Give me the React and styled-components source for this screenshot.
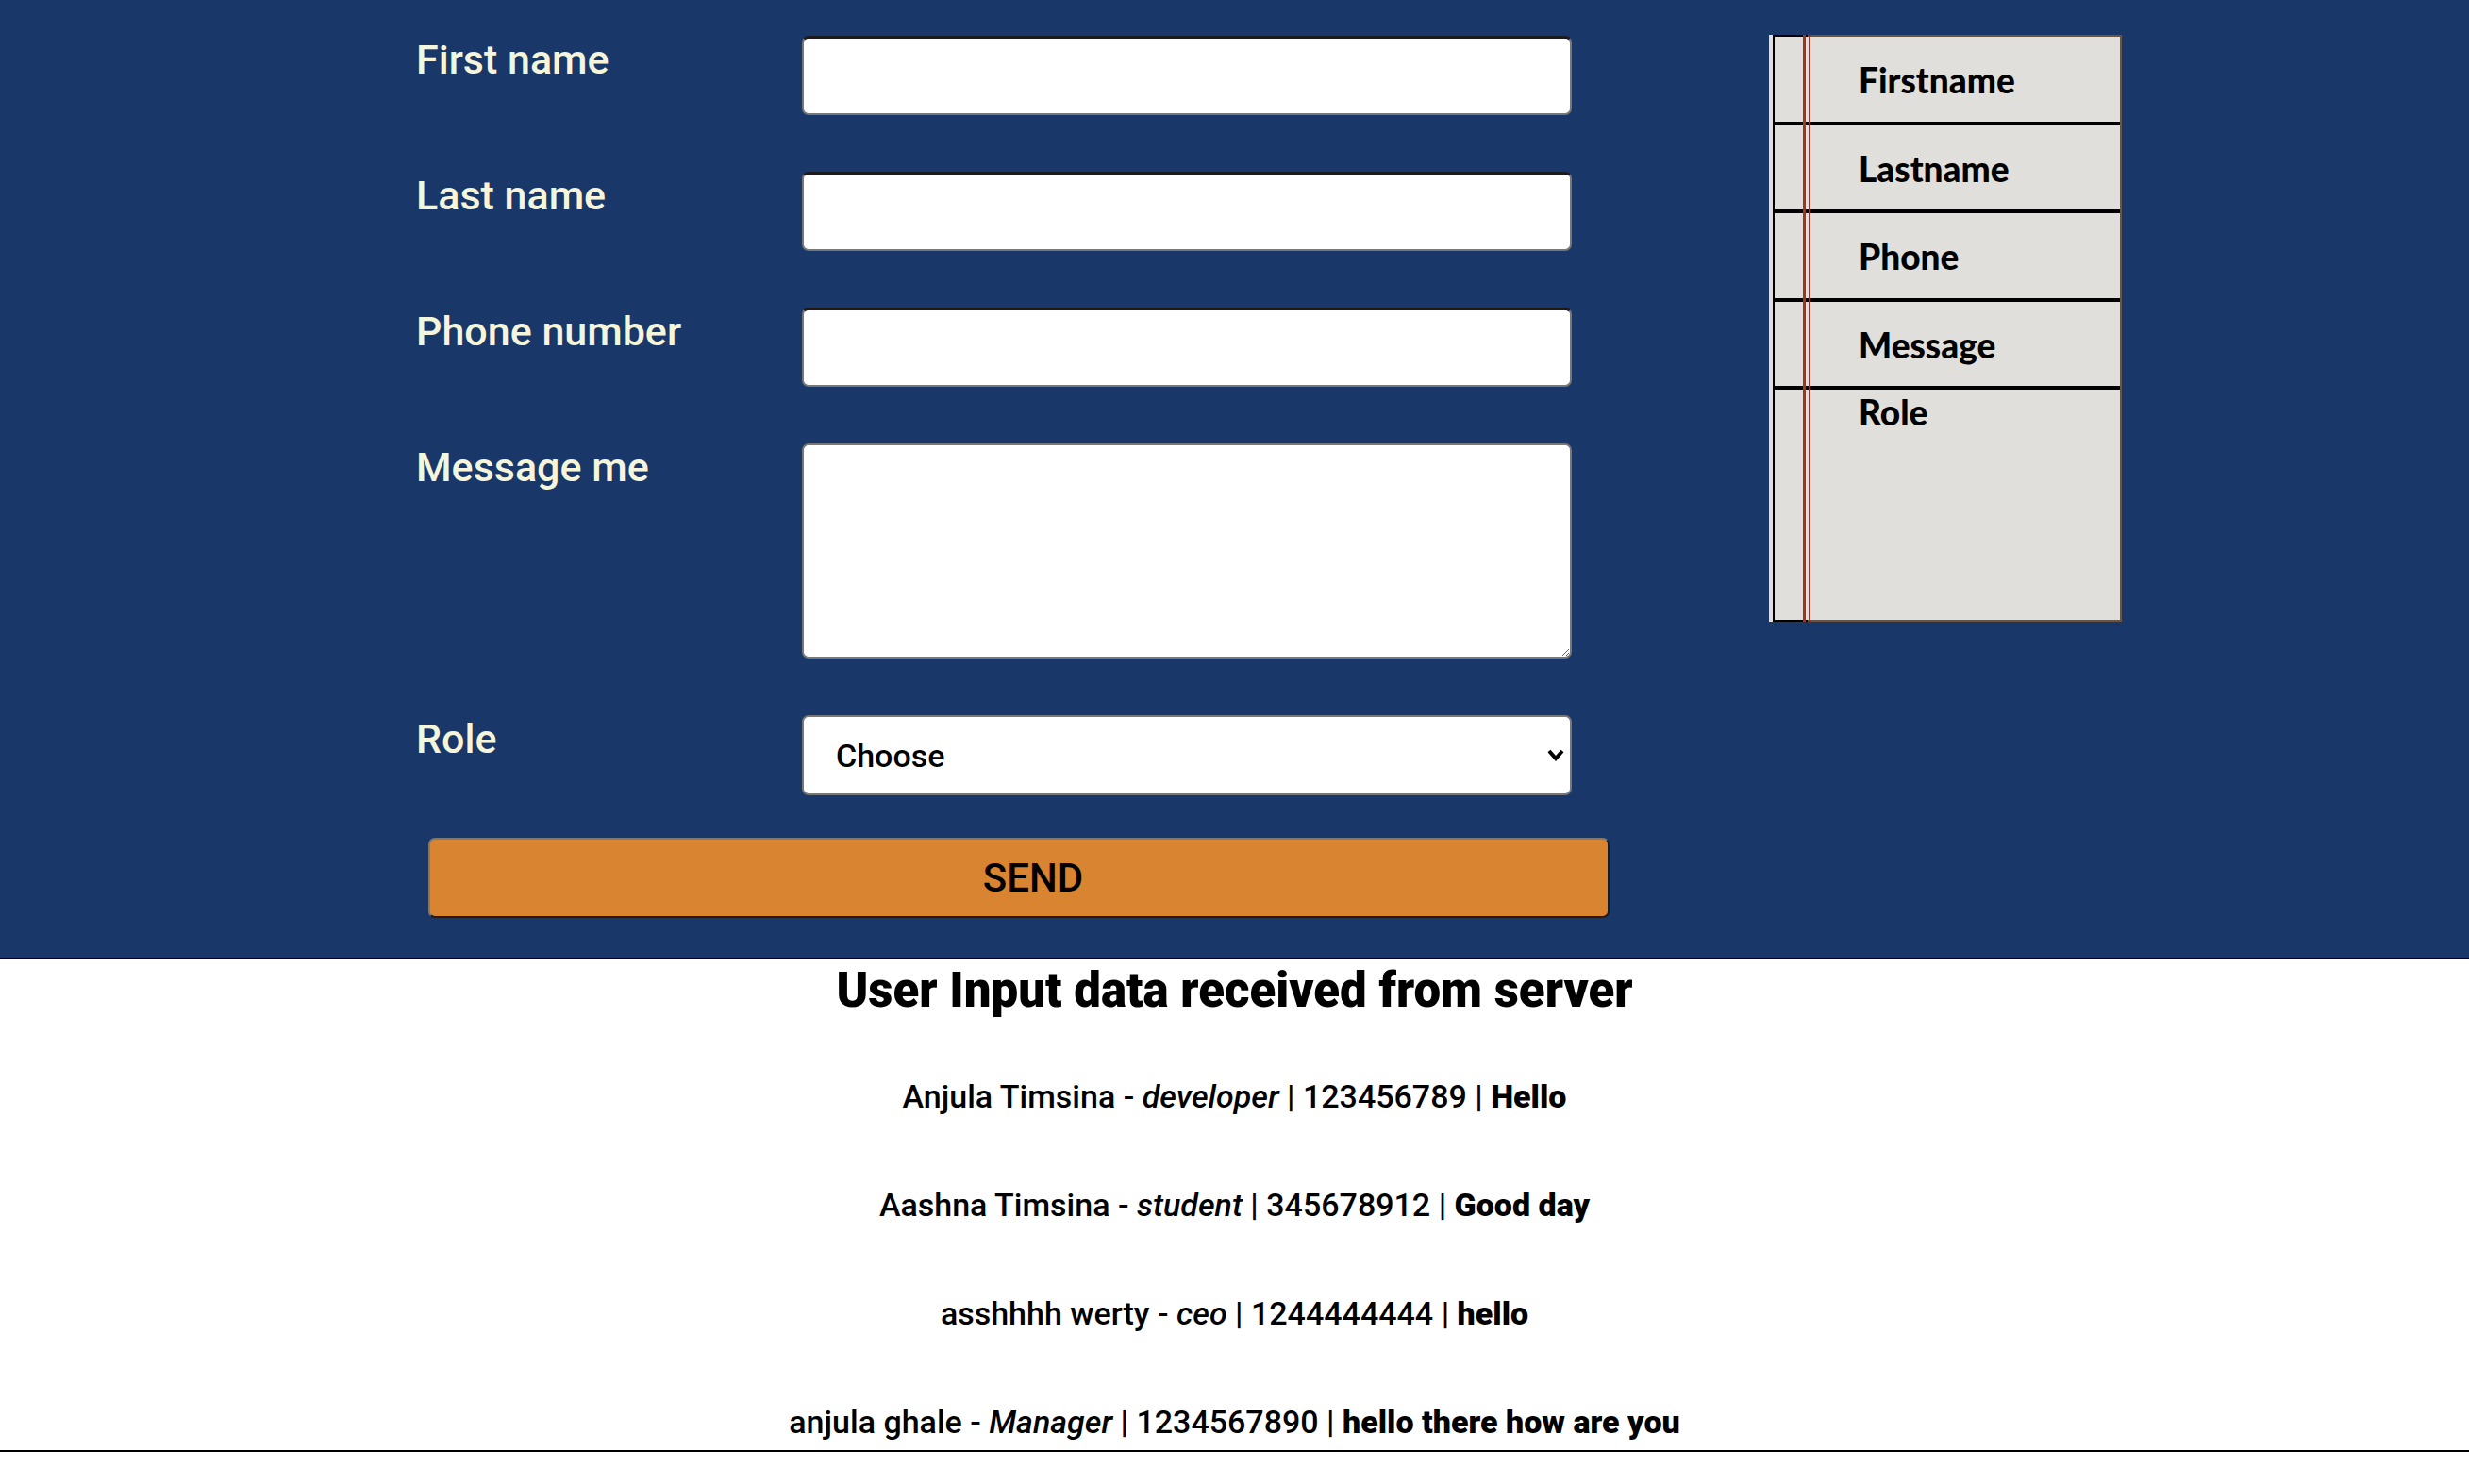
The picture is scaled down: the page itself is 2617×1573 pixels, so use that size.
import styled, { createGlobalStyle } from "styled-components";

const GlobalStyle = createGlobalStyle`
    body {
        margin: 0;
        font-family: Roboto, "Liberation Sans", sans-serif;
        background: #fff;
    }
`

const Top = styled.section`
    display: flex;
    align-items: flex-start;
    background-color: #193768;
    padding: 37px 0 42px 441px;
`

const Form = styled.form`
    width: 1265px;
    margin-top: 1px;
`

const Fields = styled.div`
    display: grid;
    grid-template-columns: 409px 816px;
    row-gap: 60px;
    align-items: start;
`

const Label = styled.label`
    color: beige;
    font-size: 43px;
    font-weight: 500;
    line-height: normal;
`

const fieldBase = `
    box-sizing: border-box;
    width: 816px;
    background: #fff;
    border: 2px solid #777;
    border-radius: 7px;
    font-family: Roboto, "Liberation Sans", sans-serif;
    margin: 0;
`

const Input = styled.input`
    ${fieldBase}
    height: 84px;
    border-top: 3px solid #1b1b1b;
`

const TextArea = styled.textarea`
    ${fieldBase}
    display: block;
    height: 228px;
    resize: both;
`

const SelectWrap = styled.div`
    position: relative;
    width: 816px;

    svg {
        position: absolute;
        right: 8px;
        top: 36px;
        pointer-events: none;
    }
`

const Select = styled.select`
    ${fieldBase}
    appearance: none;
    -webkit-appearance: none;
    height: 85px;
    font-size: 34px;
    font-weight: 500;
    color: #000;
    padding: 0 40px 0 34px;
`

const SendButton = styled.button`
    display: block;
    box-sizing: border-box;
    width: 1252px;
    height: 85px;
    margin: 45px 0 0 13px;
    padding: 0 0 0 30px;
    background-color: #d88431;
    color: #000;
    font-family: Roboto, "Liberation Sans", sans-serif;
    font-size: 42px;
    font-weight: 500;
    border: 2px solid #1c1c1c;
    border-top-color: #7a7a7a;
    border-left-color: #7a7a7a;
    border-radius: 7px;
`

const Paper = styled.aside`
    margin-left: 169px;
    padding-left: 4px;
    background: #e0dfdb;
`

const Sheet = styled.div`
    position: relative;
    box-sizing: border-box;
    width: 370px;
    height: 622px;
    border: 2px solid;
    border-image: linear-gradient(to right, #000 36px, #6b5440 36px) 1;
    background: #e0dfdb;

    &::before {
        content: "";
        position: absolute;
        top: -2px;
        bottom: -2px;
        left: 30px;
        width: 3px;
        border-left: 3px solid #a5321f;
        border-right: 2px solid #a5321f;
    }
`

const List = styled.ul`
    list-style: none;
    margin: 0;
    padding: 0;
`

const Item = styled.li`
    box-sizing: border-box;
    height: ${p => (p.$last ? "auto" : "93.5px")};
    padding: ${p => (p.$last ? "2px" : "24px")} 0 0 89px;
    border-bottom: ${p => (p.$last ? "none" : "4px solid #000")};
    font-family: Lato, "DejaVu Sans", sans-serif;
    font-weight: 900;
    font-size: 37px;
    line-height: 44px;
    color: #000;
`

const Results = styled.section`
    border-top: 2px solid #000;
    border-bottom: 2px solid #000;
    text-align: center;
    padding-bottom: 10px;
`

const Heading = styled.h2`
    margin: 3px 0 0;
    font-size: 51px;
    font-weight: 900;
    line-height: normal;
`

const Row = styled.p`
    margin: ${p => (p.$first ? "64px" : "76px")} 0 0;
    font-size: 34px;
    font-weight: 500;
    line-height: 39px;
    color: #000;

    b {
        font-weight: 900;
    }
`

const Chevron = () => (
    <svg width="18" height="13" viewBox="0 0 18 13">
        <path d="M2 2 L9 10 L16 2" fill="none" stroke="#000" strokeWidth="4" />
    </svg>
)

const users = [
    { name: "Anjula Timsina", role: "developer", phone: "123456789", msg: "Hello" },
    { name: "Aashna Timsina", role: "student", phone: "345678912", msg: "Good day" },
    { name: "asshhhh werty", role: "ceo", phone: "1244444444", msg: "hello" },
    { name: "anjula ghale", role: "Manager", phone: "1234567890", msg: "hello there how are you" },
]

const sideItems = ["Firstname", "Lastname", "Phone", "Message", "Role"]

const App = () => {
    return (
        <>
            <GlobalStyle />
            <Top>
                <Form onSubmit={e => e.preventDefault()}>
                    <Fields>
                        <Label htmlFor="first">First name</Label>
                        <Input id="first" type="text" />
                        <Label htmlFor="last">Last name</Label>
                        <Input id="last" type="text" />
                        <Label htmlFor="phone">Phone number</Label>
                        <Input id="phone" type="text" />
                        <Label htmlFor="msg">Message me</Label>
                        <TextArea id="msg" />
                        <Label htmlFor="role">Role</Label>
                        <SelectWrap>
                            <Select id="role" defaultValue="">
                                <option value="">Choose</option>
                                <option value="developer">Developer</option>
                                <option value="student">Student</option>
                            </Select>
                            <Chevron />
                        </SelectWrap>
                    </Fields>
                    <SendButton type="submit">SEND</SendButton>
                </Form>
                <Paper>
                    <Sheet>
                        <List>
                            {sideItems.map((item, i) => (
                                <Item key={item} $last={i === sideItems.length - 1}>{item}</Item>
                            ))}
                        </List>
                    </Sheet>
                </Paper>
            </Top>
            <Results>
                <Heading>User Input data received from server</Heading>
                {users.map((u, i) => (
                    <Row key={i} $first={i === 0}>
                        {u.name} - <i>{u.role}</i> | {u.phone} | <b>{u.msg}</b>
                    </Row>
                ))}
            </Results>
        </>
    )
}

export default App;
